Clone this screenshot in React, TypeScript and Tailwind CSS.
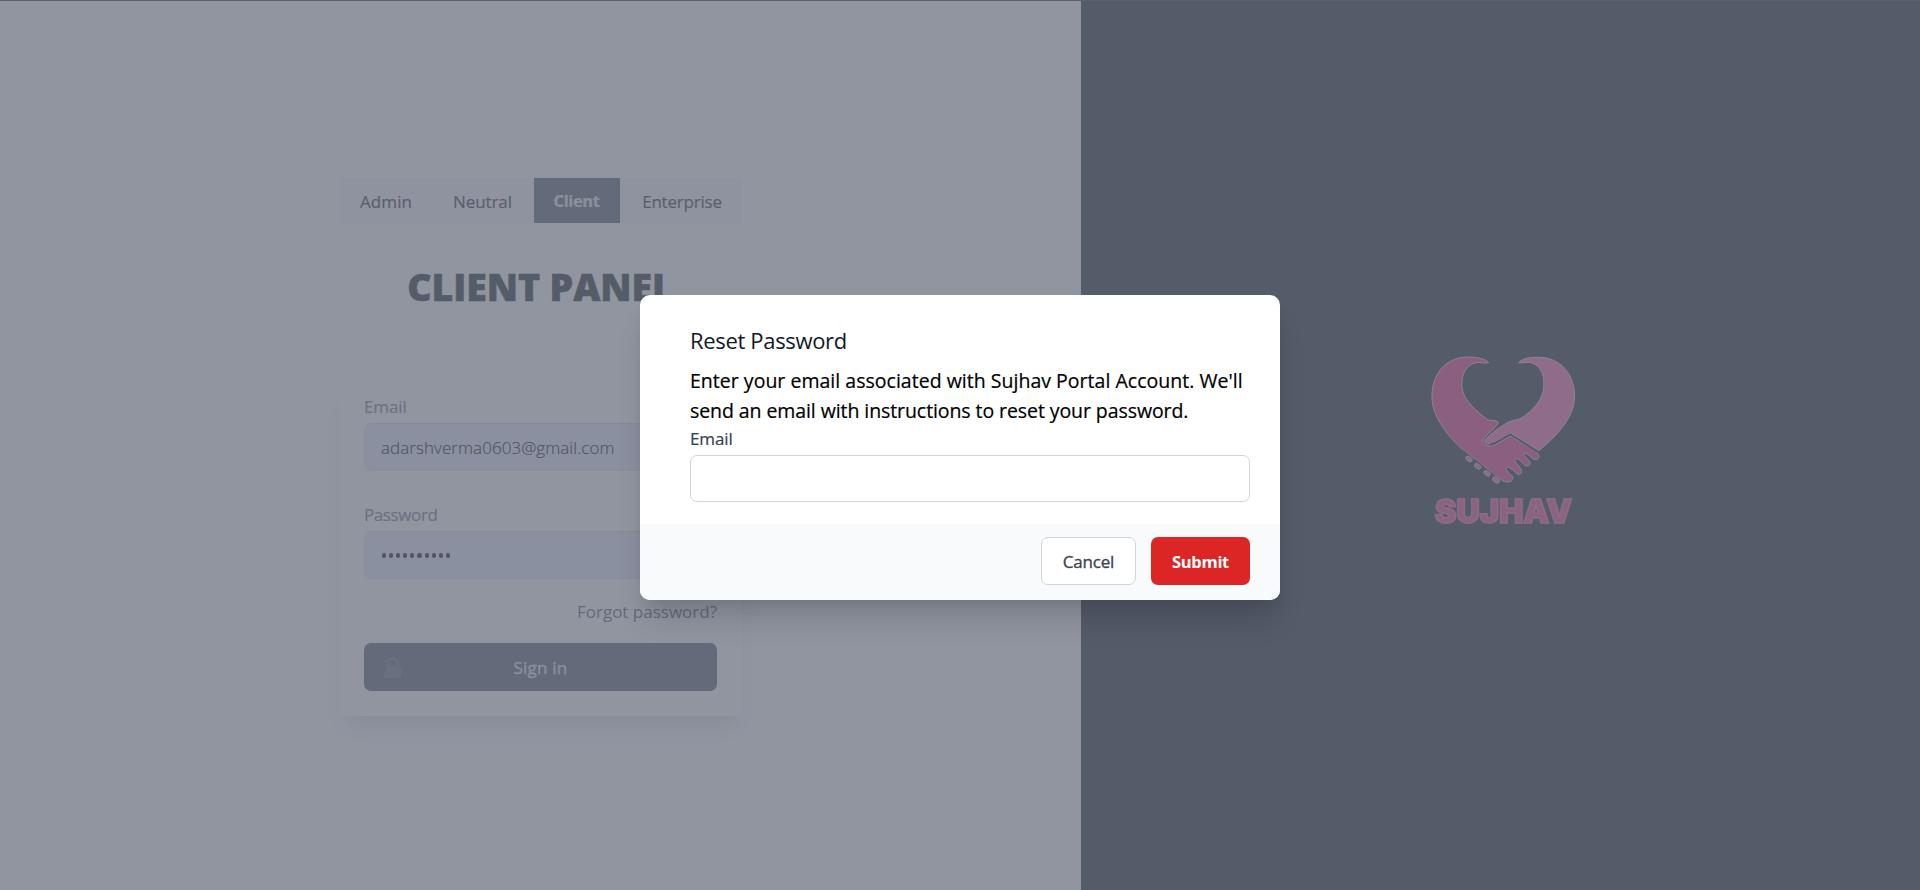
const tabs = [
  { name: "Admin", box: "w-[92px] pl-px", text: "tracking-[0.1px]" },
  { name: "Neutral", box: "w-[102px]", text: "tracking-[-0.1px]" },
  { name: "Client", box: "w-[86px] bg-[#4b5563] text-[16.5px] font-bold text-gray-200", text: "tracking-[-0.4px]" },
  { name: "Enterprise", box: "w-[122px] pl-[3px]", text: "tracking-[-0.2px]" },
];

function Logo() {
  return (
    <svg viewBox="0 0 600 630" className="mr-px h-[210px] w-[200px]">
      <g stroke="#efb4d2" strokeWidth="3" strokeLinejoin="round">
        <path
          fill="#ec2a7c"
          d="M266 98 C258 86 222 78 190 82 C130 88 94 140 96 204 C98 258 134 306 184 356 L304 450 C316 460 336 458 339 444 C339 436 318 424 318 416 C322 408 334 414 346 427 C356 438 367 432 364 420 C360 408 344 398 344 390 C349 382 358 388 370 402 C380 412 392 408 390 396 C385 386 369 378 370 371 C376 366 386 374 396 384 C406 392 418 388 417 378 C414 368 404 362 396 356 L331 318 L284 345 C268 352 250 346 248 334 C252 318 276 306 296 278 C290 270 276 272 264 270 C232 246 196 216 187 180 C180 140 196 104 228 98 C242 96 256 102 266 98 Z"
        />
        <path
          fill="#fb62a8"
          d="M356 98 C366 86 396 78 432 83 C488 90 525 140 524 200 C522 262 476 312 417 362 L332 310 L278 340 C262 346 250 340 256 328 C276 308 306 286 326 276 C340 270 350 270 360 266 C394 246 424 216 430 180 C436 140 424 106 392 98 C378 95 368 101 356 98 Z"
        />
      </g>
      <path d="M184 360 L306 456" stroke="#111827" strokeWidth="6" fill="none" />
      <path
        d="M268 344 C282 344 296 332 331 313 L414 366"
        stroke="#111827"
        strokeWidth="5"
        fill="none"
        strokeLinejoin="round"
      />
      <g fill="#e06aa4" stroke="#efb4d2" strokeWidth="2">
        <ellipse cx="207" cy="387" rx="11" ry="7" transform="rotate(35 207 387)" />
        <ellipse cx="233" cy="409" rx="11" ry="7" transform="rotate(35 233 409)" />
        <ellipse cx="261" cy="430" rx="11" ry="7" transform="rotate(35 261 430)" />
        <ellipse cx="288" cy="450" rx="12" ry="8" transform="rotate(35 288 450)" />
      </g>
      <text
        x="104"
        y="578"
        textLength="412"
        lengthAdjust="spacing"
        fill="#ec3a84"
        stroke="#ec5c98"
        strokeWidth="5"
        className="font-['Inter',sans-serif] text-[97px] font-black"
      >
        SUJHAV
      </text>
    </svg>
  );
}

function LoginPane() {
  return (
    <section className="flex w-[1081px] flex-col items-center bg-[#fefeff] pt-[178px]">
      <nav className="flex h-[45px] w-[402px] bg-[#f7f7f9] text-[17px] text-[#1f2937] [-webkit-text-stroke:0.2px]">
        {tabs.map((t) => (
          <div key={t.name} className={`flex items-center justify-center pt-[2px] ${t.box}`}>
            <span className={t.text}>{t.name}</span>
          </div>
        ))}
      </nav>
      <h1 className="mt-[41px] text-[37.5px] leading-[45px] font-extrabold tracking-[-0.1px] text-[#111827] [-webkit-text-stroke:0.6px]">
        CLIENT PANEL
      </h1>
      <form className="mt-[76px] flex h-[331px] w-[402px] flex-col bg-white px-[24.5px] pt-[9px] text-[17px] shadow-[0_15px_20px_-6px_rgba(0,0,0,0.14)]">
        <label className="h-[29px] leading-[25px] tracking-[-0.1px] text-[#6b7280] [-webkit-text-stroke:0.2px]">Email</label>
        <div className="flex h-[48px] items-center rounded-[7px] border border-[#dfe3ee] border-t-[#cdd1da] bg-[#e7ebfb] px-4 pt-[2px] font-light tracking-[0.06px] text-black [-webkit-text-stroke:0.2px]">
          adarshverma0603@gmail.com
        </div>
        <label className="mt-[31px] h-[29px] leading-[25px] tracking-[-0.4px] text-[#6b7280] [-webkit-text-stroke:0.2px]">
          Password
        </label>
        <div className="flex h-[48px] items-center gap-[3px] rounded-[7px] border border-[#dfe3ee] border-t-[#cdd1da] bg-[#e7ebfb] px-[17px] pt-[1px]">
          {Array.from({ length: 10 }, (_, i) => (
            <span key={i} className="size-[4.1px] rounded-full bg-black" />
          ))}
        </div>
        <a className="mt-[20px] self-end leading-[25px] text-[#4b5563]">Forgot password?</a>
        <button
          type="button"
          className="relative mt-[19px] flex h-[48px] shrink-0 items-center justify-center rounded-[7px] bg-[#4b5563] pt-[2px] tracking-[0.2px] text-gray-200 [-webkit-text-stroke:0.3px]"
        >
          <svg viewBox="0 0 20 22" className="absolute top-[14px] left-[19px] h-[22px] w-[20px]">
            <path d="M5 10 V6.5 C5 2.5 8 1 10.5 1.4 C13 2 14.2 5 16 9" fill="none" stroke="#6f7683" strokeWidth="1.6" />
            <path d="M4 9 H15.5 L18.5 12 V20 Q18.5 21 17.5 21 H1.5 Q.5 21 .8 20 Z" fill="#66707c" />
          </svg>
          Sign in
        </button>
      </form>
    </section>
  );
}

function ResetDialog() {
  return (
    <div
      role="dialog"
      className="h-[305px] w-[640px] overflow-hidden rounded-[10px] bg-white shadow-[0_25px_31px_-6px_rgba(0,0,0,0.14),0_10px_14px_-5px_rgba(0,0,0,0.08)]"
    >
      <div className="h-[229px] pt-[30px] pr-[30px] pl-[50px]">
        <h2 className="text-[22px] leading-[30px] tracking-[-0.33px] text-[#111827]">Reset Password</h2>
        <p className="mt-[11px] text-[19.5px] leading-[30px] tracking-[0.02px] whitespace-nowrap text-black [-webkit-text-stroke:0.2px_black]">
          Enter your email associated with Sujhav Portal Account. We'll
          <br />
          <span className="tracking-[-0.08px]">send an email with instructions to reset your password.</span>
        </p>
        <label className="block h-[29px] text-[17px] leading-[25px] tracking-[-0.1px] text-[#374151] [-webkit-text-stroke:0.2px]">
          Email
        </label>
        <input className="block h-[47px] w-full rounded-[7px] border border-[#d1d5db] bg-white outline-none" />
      </div>
      <div className="flex h-[76px] justify-end gap-[15px] bg-[#f9fafb] pt-[13px] pr-[30px]">
        <button
          type="button"
          className="h-[48px] w-[95px] rounded-[7px] border border-[#d1d5db] bg-white pt-px text-[17px] tracking-[-0.2px] text-[#374151] [-webkit-text-stroke:0.3px_#374151]"
        >
          Cancel
        </button>
        <button
          type="button"
          className="h-[48px] w-[99px] rounded-[7px] bg-[#dc2626] pt-[2px] text-[16.5px] font-bold tracking-[-0.3px] text-white"
        >
          Submit
        </button>
      </div>
    </div>
  );
}

export default function App() {
  return (
    <div className="relative h-[890px] w-[1920px] overflow-hidden font-['Open_Sans','Noto_Sans',sans-serif]">
      <main className="flex h-full">
        <LoginPane />
        <section className="flex flex-1 justify-center bg-[#111827] pt-[330px]">
          <Logo />
        </section>
      </main>
      <div className="absolute inset-0 flex items-start justify-center border-t border-[#5b5f6e] bg-[#6b7280]/75 pt-[294px]">
        <ResetDialog />
      </div>
    </div>
  );
}
